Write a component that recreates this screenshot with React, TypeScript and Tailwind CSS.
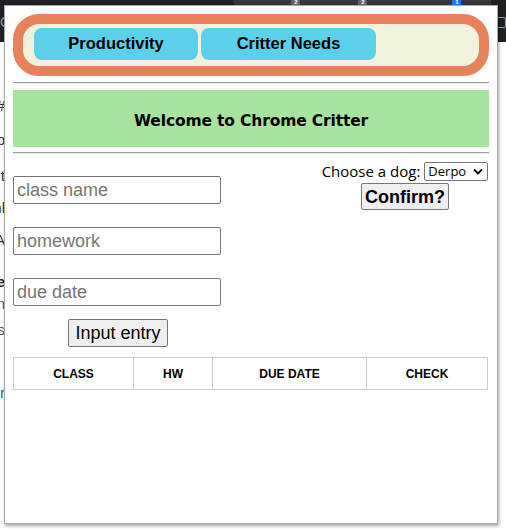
import React from "react";

const inputCls =
  "w-[208px] h-[28px] border border-[#767676] rounded-[2px] px-[3px] text-[18px] text-black placeholder:text-[#757575] outline-none font-['Liberation_Sans',Arial,sans-serif]";

const fragments: { ch: string; h: string; cls: string }[] = [
  { ch: "#", h: "h-[34px]", cls: "text-[#333]" },
  { ch: "b", h: "h-[36px]", cls: "text-[#333]" },
  { ch: "t", h: "h-[32px]", cls: "text-[#333]" },
  { ch: "nl", h: "h-[32px]", cls: "text-[#333]" },
  { ch: "A", h: "h-[42px]", cls: "text-[#333]" },
  { ch: "e", h: "h-[22px]", cls: "text-[#222] font-bold" },
  { ch: "n", h: "h-[26px]", cls: "text-[#555]" },
  { ch: "s", h: "h-[63px]", cls: "text-[#555]" },
  { ch: "r", h: "h-[20px]", cls: "text-[#1a5fb4]" },
];

export default function App() {
  return (
    <div className="relative w-[506px] h-[529px] overflow-hidden bg-white font-['Liberation_Sans',Arial,sans-serif]">
      {/* browser chrome behind the popup */}
      <div className="relative h-[42px] bg-[#202124] flex">
        <div className="w-[236px] flex items-start pt-[14px] pl-0 text-[14px] leading-[16px] text-[#9aa0a6]">C</div>
        <div className="w-[260px] h-[6px] bg-[#35363a] rounded-bl-[6px] flex items-start gap-[58px] pl-[58px]">
          <span className="w-[9px] h-[5px] bg-[#5f6368] text-[6px] leading-[5px] text-white text-center font-bold">2</span>
          <span className="w-[9px] h-[5px] bg-[#5f6368] text-[6px] leading-[5px] text-white text-center font-bold">2</span>
          <span className="ml-[27px] w-[9px] h-[5px] bg-[#1a73e8] text-[6px] leading-[5px] text-white text-center font-bold">1</span>
        </div>
        <div className="flex-1 flex items-start pt-[17px] pl-[5px]">
          <div className="w-[10px] h-[11px] border border-[#9aa0a6] rounded-[2px]" />
        </div>
      </div>
      {/* page text fragments peeking at the left */}
      <div className="flex flex-col w-[5px] overflow-hidden pt-[56px] items-end">
        {fragments.map((f, i) => (
          <div key={i} className={`${f.h} text-[15px] leading-[16px] whitespace-nowrap ${f.cls}`}>
            {f.ch}
          </div>
        ))}
      </div>

      {/* extension popup window */}
      <div className="absolute left-[4px] top-[5px] w-[494px] h-[519px] bg-white border border-[#a9a9a9] shadow-[1px_2px_3px_rgba(0,0,0,0.35)] px-[8px] pt-[8px] flex flex-col">
        {/* nav pill */}
        <div className="w-[476px] h-[62px] rounded-[26px] border-[10px] border-[#e8825a] bg-[#f2f2dc] flex items-start pl-[11px] pt-[4px] gap-[3px]">
          <div className="w-[164px] h-[32px] rounded-[8px] bg-[#5bd0ea] flex items-center justify-center text-[16.5px] font-bold text-black pb-[1px]">
            Productivity
          </div>
          <div className="w-[175px] h-[32px] rounded-[8px] bg-[#5bd0ea] flex items-center justify-center text-[16.5px] font-bold text-black pb-[1px]">
            Critter Needs
          </div>
        </div>
        <div className="mt-[6px] w-[476px] border-t border-t-[#9a9a9a] border-b border-b-[#eeeeee]" />
        <div className="mt-[6px] w-[476px] h-[57px] bg-[#a6e4a0] flex items-center justify-center pt-[6px]">
          <span className="text-[15.5px] font-bold text-black font-['DejaVu_Sans',Verdana,sans-serif] tracking-[-0.15px]">
            Welcome to Chrome Critter
          </span>
        </div>
        <div className="mt-[5px] w-[476px] border-t border-t-[#9a9a9a] border-b border-b-[#eeeeee]" />

        <div className="flex justify-between w-[476px]">
          <div className="flex flex-col pt-[22px] gap-[23px]">
            <input className={inputCls} placeholder="class name" />
            <input className={inputCls} placeholder="homework" />
            <input className={inputCls} placeholder="due date" />
            <div className="-mt-[10px] pl-[55px]">
              <button className="w-[100px] h-[28px] border border-[#767676] rounded-[2px] bg-[#efefef] text-[18px] text-black">
                Input entry
              </button>
            </div>
          </div>
          <div className="flex flex-col items-center w-[168px] pt-[6px]">
            <div className="flex items-center gap-[4px]">
              <span className="text-[15px] text-black font-['Open_Sans',sans-serif]">Choose a dog:</span>
              <div className="relative w-[64px] h-[19px] border border-[#767676] rounded-[2px] bg-white flex items-center pl-[3px] text-[13px] text-black font-['Open_Sans',sans-serif]">
                Derpo
                <svg className="absolute right-[4px] top-[5px]" width="10" height="7" viewBox="0 0 10 7">
                  <path d="M1 1.5 L5 5.5 L9 1.5" stroke="#000" strokeWidth="1.8" fill="none" />
                </svg>
              </div>
            </div>
            <button className="w-[88px] h-[27px] border border-[#767676] rounded-[2px] bg-[#efefef] text-[18px] font-bold text-black">
              Confirm?
            </button>
          </div>
        </div>

        <table className="mt-[10px] w-[475px] border-collapse">
          <thead>
            <tr className="h-[32px] text-[12px] font-bold text-black">
              <th className="w-[120px] border border-[#cccccc] font-bold">CLASS</th>
              <th className="w-[79px] border border-[#cccccc] font-bold">HW</th>
              <th className="w-[154px] border border-[#cccccc] font-bold">DUE DATE</th>
              <th className="border border-[#cccccc] font-bold">CHECK</th>
            </tr>
          </thead>
        </table>
      </div>
    </div>
  );
}
